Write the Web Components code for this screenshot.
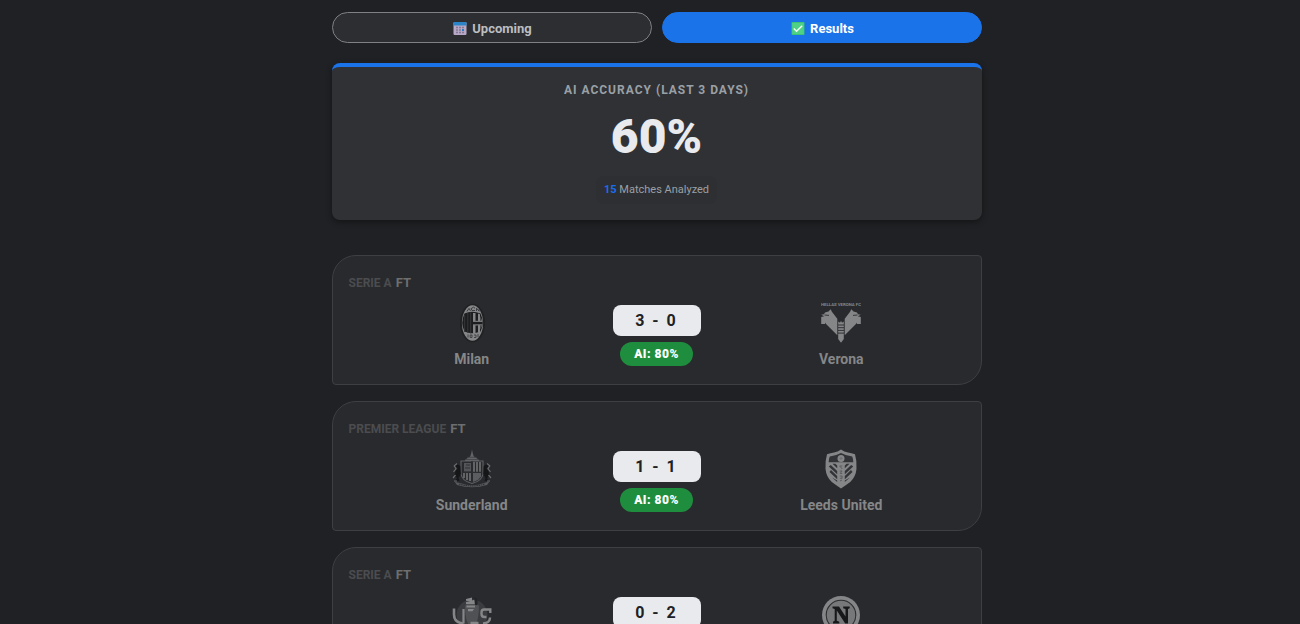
<!DOCTYPE html>
<html lang="en">
<head>
<meta charset="utf-8">
<title>Results</title>
<style>
    body {
        margin: 0;
        height: 624px;
        overflow: hidden;
        background: #202124;
        color: #e8eaed;
        font-family: Roboto, "Liberation Sans", sans-serif;
    }
</style>
</head>
<body>
<match-board>
    <tab-bar slot="tabs">
        <tab-button icon="calendar">Upcoming</tab-button>
        <tab-button icon="check" active>Results</tab-button>
    </tab-bar>
    <accuracy-card value="60%" matches="15">AI Accuracy (Last 3 Days)</accuracy-card>
    <match-card league="Serie A" score="3 - 0" ai="80%">
        <team-badge slot="home" crest="milan">Milan</team-badge>
        <team-badge slot="away" crest="verona">Verona</team-badge>
    </match-card>
    <match-card league="Premier League" score="1 - 1" ai="80%">
        <team-badge slot="home" crest="sunderland">Sunderland</team-badge>
        <team-badge slot="away" crest="leeds">Leeds United</team-badge>
    </match-card>
    <match-card league="Serie A" score="0 - 2">
        <team-badge slot="home" crest="cremonese"></team-badge>
        <team-badge slot="away" crest="napoli"></team-badge>
    </match-card>
</match-board>

<script>
const icons = {
    calendar: `<svg width="14" height="14" viewBox="0 0 14 14">
        <rect x=".5" width="13" height="13" rx="1.2" fill="#b9a9c9"/>
        <path d="M.5 3.5V1q0-1 1-1h11q1 0 1 1v2.500z" fill="#2b83c8"/>
        <path d="M3 5.500h2M6 5.500h2M9 5.500h2M3 8h2M6 8h2M3 10.500h2M6 10.500h2M9 10.500h2" stroke="#857a93" stroke-width="1.5"/>
        <path d="M9 8h2" stroke="#287fc4" stroke-width="1.9"/>
    </svg>`,
    check: `<svg width="14" height="14" viewBox="0 0 14 14">
        <rect x=".5" width="13" height="13" rx=".8" fill="#35bd75"/>
        <rect x="1.2" y=".7" width="11.6" height="11.6" fill="#50d286"/>
        <path d="M2.8 6.500l2.7 2.800 5.700-5.600" fill="none" stroke="#f4fff8" stroke-width="1.4"/>
    </svg>`
};

const crests = {
    milan: `
        <ellipse cx="20.5" cy="20" rx="12.5" ry="19.3" fill="#202123"/>
        <ellipse cx="20.5" cy="20" rx="10.6" ry="17.8" fill="#858688"/>
        <path d="M12.5 10.5Q20 7 28.5 10.5Q33 20 28.5 28.5Q20 32 12.5 28.5Q8 20 12.5 10.5z" fill="#1c1d1f"/>
        <path d="M12.7 12v17M15.8 10v20M18.7 9.5v21" stroke="#37383b" stroke-width="1"/>
        <path d="M21 10h2.500v8.500H21zM21 22h2.500v8.500H21zM26 10.500l2 .8v7.200h-2zM26 22h2v7l-2 .8z" fill="#858688"/>
        <path d="M21 17.800h9.300v1.200H21zM21 21.200h9.300v1.200H21z" fill="#77787a"/>
        <path d="M28.500 13l1.500 5h-1.500zM28.500 22.500H30l-1.500 4z" fill="#737476"/>
        <path d="M15 8.400l2-3 1.500 2.500M23 5.200l-1.500-1-2.500 1.500 1 1.800h3M24.500 8V5.200l2.600 3V6" fill="none" stroke="#3c3d40" stroke-width="1"/>
        <path d="M16 31.500v3M18.200 32h1.800v2.500h-1.800zM22 32h2v2.500h-2M26 31v3" fill="none" stroke="#3c3d40" stroke-width=".9"/>`,
    verona: `
        <path d="M.2 11.800L3 11.300 4 9.500 7.500 8.500 9.700 6.300l1.200 2.500 5.400 7v16.500L4.800 20.800 4 19.500V21H.2v-7l3-.8z" fill="#858688"/>
        <path d="M39.800 11.800L37 11.300 36 9.500 32.500 8.500 30.300 6.300l-1.200 2.500-5.400 7v16.500l11.500-11.500.8-1.300V21h3.800v-7l-3-.8z" fill="#858688"/>
        <path d="M3.500 12l4.500.4M36.500 12l-4.500.4" stroke="#36373a"/>
        <path d="M17.200 18.500l1.800 1.200 1-2 1 2 1.800-1.200V36L20 39.800 17.200 36z" fill="#858688"/>
        <path d="M17 22h6M17 24.700h6M17 27.400h6M17 30.100h6" stroke="#303134" stroke-width="1"/>`,
    sunderland: `
        <path d="M20 .5l.8 4 1 3 4 2.500 2 2.500H12.200l2-2.500 4-2.500 1-3z" fill="#636467"/>
        <path d="M13 10.500h14M15 8.300h10" stroke="#404144" stroke-width=".8"/>
        <path d="M9 12h22v13q-1 7-11 9.500-10-2.500-11-9.500z" fill="#292a2d" stroke="#606164" stroke-width="1.1"/>
        <path d="M12 14h7v8.500h-7z" fill="#545558"/><path d="M14 16h4M13 19h5" stroke="#3c3d40" stroke-width="1.3"/>
        <path d="M22 13v10M25 13v10M28 13v10M12 24v5M15 24v7M18 24v8" stroke="#77787a" stroke-width="1.5"/>
        <path d="M21 24h8v3.500l-3 3.500-5 2z" fill="#5c5d60"/><path d="M20 12v21M10 23.400h20" stroke="#2c2d30" stroke-width="1.2"/>
        <path d="M8.300 17l-3-1.800-2 2.300 2.500 1.500L3.500 22l-1 4.500L5 29l-1.500 3h4l-1-3 2.300-4zM31.700 17l3-1.800 2 2.300-2.500 1.500 2.300 3 1 4.500L35 29l1.500 3h-4l1-3-2.300-4z" fill="#151618"/>
        <path d="M5 14.500l-2.800 2.300 1.800 3-2.500 3M1 29l2.500-3M2 32h3M35 14.500l2.800 2.300-1.800 3 2.500 3M39 29l-2.500-3M38 32h-3" fill="none" stroke="#6a6b6e" stroke-width="1.2"/>
        <path d="M2.500 32.500q3 1 5.500 1.500 12 4.500 24 0l5.500-1.500-2.500 3.500q-15 4.500-30 0z" fill="#58595c"/>
        <path d="M7 35q13 3.800 26 0" fill="none" stroke="#303134" stroke-width="1.2" stroke-dasharray="1.5 .7"/>`,
    leeds: `
        <path d="M20 .5q3.300 2.300 7 3 3.600.4 7 1.800Q36 12 35.500 20q-.8 8-6.300 13-4.800 3.600-9.200 6.400-4.400-2.800-9.200-6.400Q5.300 28 4.500 20 4 12 6 5.300q3.400-1.400 7-1.800 3.700-.7 7-3z" fill="#858688"/>
        <path d="M20 4q-5 2.700-11.200 3.500Q7.600 10 7.700 13.300H32.300Q32.400 10 31.200 7.500 25 6.700 20 4z" fill="#333437"/>
        <path d="M7.800 17.500l2-1.500 6.400 6v3.300zM8.500 23l1.500-2 6.200 6v3.300zM32.200 17.500l-2-1.500-6.400 6v3.300zM31.500 23l-1.500-2-6.200 6v3.300zM11.500 14.800h2.800l1.900 1.700v2.800zM28.500 14.800h-2.800l-1.900 1.700v2.800zM11 28.500l5.200 4.500v-1.500zM29 28.500L23.800 33v-1.500z" fill="#333437"/>
        <path d="M21.300 17h-2.600l2.500 3M18.700 22h2.300l-1.800 2.500h2M18.900 27h2.200v2.300h-2.200M19 32l2-1" fill="none" stroke="#58595c" stroke-width=".9"/>
        <circle cx="20" cy="9.400" r="3.500" fill="#858688"/>
        <path d="M18.500 9.400h3M20 8v3" stroke="#707174"/>`,
    cremonese: `
        <circle cx="20" cy="20" r="15.500" fill="#3b3c3f"/>
        <path d="M13 11q0 18 7 22 7-4 7-22l-3-4h-8z" fill="#505154"/>
        <path d="M14 4l6-1.500v3l3-1v4.500h-9V7l4-.8-4-.4zM14.500 10.500H23v2h-8.500zM16 14h6l-1.500 2.300H16z" fill="#858688"/>
        <path d="M22 2l3.500 2v6H23z" fill="#222326"/>
        <path d="M2 13.500v6Q2 27.500 11.500 28.500" fill="none" stroke="#858688" stroke-width="2.600"/>
        <path d="M11.500 14v14.500M18.500 27.800h8" fill="none" stroke="#858688" stroke-width="2.200"/>
        <path d="M39.500 14.500H32q-2.500 0-2.500 3v1.500q0 3 3 3h2M38.300 14v4M38 22.500q0 5.500-7 6" fill="none" stroke="#858688" stroke-width="2.400"/>`,
    napoli: `
        <circle cx="20" cy="20" r="19" fill="#858688"/>
        <circle cx="20" cy="20" r="14.800" fill="#77787a" stroke="#2c2d30" stroke-width="1.1"/>
        <path d="M11.500 11.500h6.500l6.500 10V14l-2.300-.8v-1.700h6.500v1.700l-1.700.8V28.500h-2.800l-8.400-13v10.300l2.500.9v1.800h-6.300v-1.800l1.700-.9V14l-2.200-.8z" fill="#17181a"/>`
};

class MatchBoard extends HTMLElement {
    constructor() {
        super();
        this.attachShadow({mode: 'open'}).innerHTML = `
            <style>
                :host {
                    display: block;
                    box-sizing: border-box;
                    width: 650px;
                    height: 624px;
                    margin-left: 331.5px;
                    padding-top: 12px;
                    overflow: clip;
                    overflow-clip-margin: 10px;
                }
                .list {
                    display: flex;
                    flex-direction: column;
                    gap: 16px;
                }
            </style>
            <slot name="tabs"></slot>
            <div class="list"><slot></slot></div>
        `;
    }
}

class TabBar extends HTMLElement {
    constructor() {
        super();
        this.attachShadow({mode: 'open'}).innerHTML = `
            <style>
                :host {
                    display: flex;
                    gap: 10px;
                    margin-bottom: 20px;
                }
            </style>
            <slot></slot>
        `;
    }
}

class TabButton extends HTMLElement {
    constructor() {
        super();
        this.attachShadow({mode: 'open'});
    }

    connectedCallback() {
        this.shadowRoot.innerHTML = `
            <style>
                :host {
                    flex: 1;
                    box-sizing: border-box;
                    height: 31px;
                    padding: 2px 0 0 2px;
                    display: flex;
                    align-items: center;
                    justify-content: center;
                    gap: 5px;
                    border: 1px solid #808184;
                    border-radius: 20px;
                    background: #2d2e31;
                    color: #bcbec1;
                    font-size: 13px;
                    line-height: 15px;
                    font-weight: 700;
                    cursor: pointer;
                }
                :host([active]) {
                    background: #1a73e8;
                    border-color: #1a73e8;
                    color: #fff;
                }
                svg { display: block; }
            </style>
            ${icons[this.getAttribute('icon')]}
            <span><slot></slot></span>
        `;
    }
}

class AccuracyCard extends HTMLElement {
    constructor() {
        super();
        this.attachShadow({mode: 'open'});
    }

    connectedCallback() {
        this.shadowRoot.innerHTML = `
            <style>
                :host {
                    box-sizing: border-box;
                    height: 157px;
                    margin-bottom: 19px;
                    padding-top: 16px;
                    display: flex;
                    flex-direction: column;
                    align-items: center;
                    border-top: 4px solid #1a73e8;
                    border-radius: 8px;
                    background: #303134;
                    box-shadow: 0 2px 6px rgba(0, 0, 0, .4);
                }
                .title {
                    font-size: 12px;
                    line-height: 14px;
                    font-weight: 700;
                    letter-spacing: 1px;
                    text-transform: uppercase;
                    color: #9aa0a6;
                }
                .value {
                    margin-top: 16px;
                    font-size: 48px;
                    line-height: 48px;
                    font-weight: 900;
                }
                .count {
                    box-sizing: border-box;
                    height: 28px;
                    margin-top: 15px;
                    padding: 0 8px;
                    border-radius: 8px;
                    background: #2e2f32;
                    font-size: 11px;
                    line-height: 27px;
                    color: #9aa0a6;
                }
                b { color: #1a6cf0; }
            </style>
            <div class="title"><slot></slot></div>
            <div class="value">${this.getAttribute('value')}</div>
            <div class="count"><b>${this.getAttribute('matches')}</b> Matches Analyzed</div>
        `;
    }
}

class MatchCard extends HTMLElement {
    constructor() {
        super();
        this.attachShadow({mode: 'open'});
    }

    connectedCallback() {
        const ai = this.getAttribute('ai');
        this.shadowRoot.innerHTML = `
            <style>
                :host {
                    display: block;
                    box-sizing: border-box;
                    height: 130px;
                    padding: 20px 16px 0;
                    border: 1px solid #3e3f42;
                    border-radius: 24px 4px 24px 4px;
                    background: #292a2d;
                }
                .league {
                    font-size: 12px;
                    line-height: 14px;
                    font-weight: 700;
                    text-transform: uppercase;
                    color: #4b4c4f;
                }
                .league span {
                    margin-left: 1px;
                    font-size: 13px;
                    color: #6d6e70;
                }
                .row {
                    display: grid;
                    grid-template-columns: 2fr 1fr 2fr;
                    margin-top: 13px;
                }
                .middle {
                    display: flex;
                    flex-direction: column;
                    align-items: center;
                    gap: 6px;
                    padding-top: 2px;
                }
                .score {
                    width: 88px;
                    margin-left: 1px;
                    border-radius: 8px;
                    background: #e8eaed;
                    color: #202124;
                    font-size: 16px;
                    line-height: 31px;
                    font-weight: 700;
                    letter-spacing: 2px;
                    text-indent: -1px;
                    text-align: center;
                }
                .ai {
                    width: 73px;
                    border-radius: 12px;
                    background: #1e8e3e;
                    color: #fff;
                    font-size: 12px;
                    line-height: 24px;
                    font-weight: 900;
                    letter-spacing: .5px;
                    text-align: center;
                }
            </style>
            <div class="league">${this.getAttribute('league')} <span>FT</span></div>
            <div class="row">
                <slot name="home"></slot>
                <div class="middle">
                    <div class="score">${this.getAttribute('score')}</div>
                    ${ai ? `<div class="ai">AI: ${ai}</div>` : ''}
                </div>
                <slot name="away"></slot>
            </div>
        `;
    }
}

class TeamBadge extends HTMLElement {
    constructor() {
        super();
        this.attachShadow({mode: 'open'});
    }

    connectedCallback() {
        const crest = this.getAttribute('crest');
        // Verona's crest carries the club name above the mastiffs
        const label = crest === 'verona' ? '<text x="20" y="3" text-anchor="middle" textLength="40" lengthAdjust="spacingAndGlyphs" font-size="4" font-weight="700" fill="#858688">HELLAS VERONA FC</text>' : '';
        this.shadowRoot.innerHTML = `
            <style>
                :host {
                    display: flex;
                    flex-direction: column;
                    align-items: center;
                    gap: 8px;
                    color: #858688;
                    font-size: 14px;
                    line-height: 16px;
                    font-weight: 700;
                }
                svg { display: block; }
            </style>
            <svg width="40" height="40" viewBox="0 0 40 40">${label}${crests[crest]}</svg>
            <span><slot></slot></span>
        `;
    }
}

customElements.define('match-board', MatchBoard);
customElements.define('tab-bar', TabBar);
customElements.define('tab-button', TabButton);
customElements.define('accuracy-card', AccuracyCard);
customElements.define('match-card', MatchCard);
customElements.define('team-badge', TeamBadge);
</script>
</body>
</html>
